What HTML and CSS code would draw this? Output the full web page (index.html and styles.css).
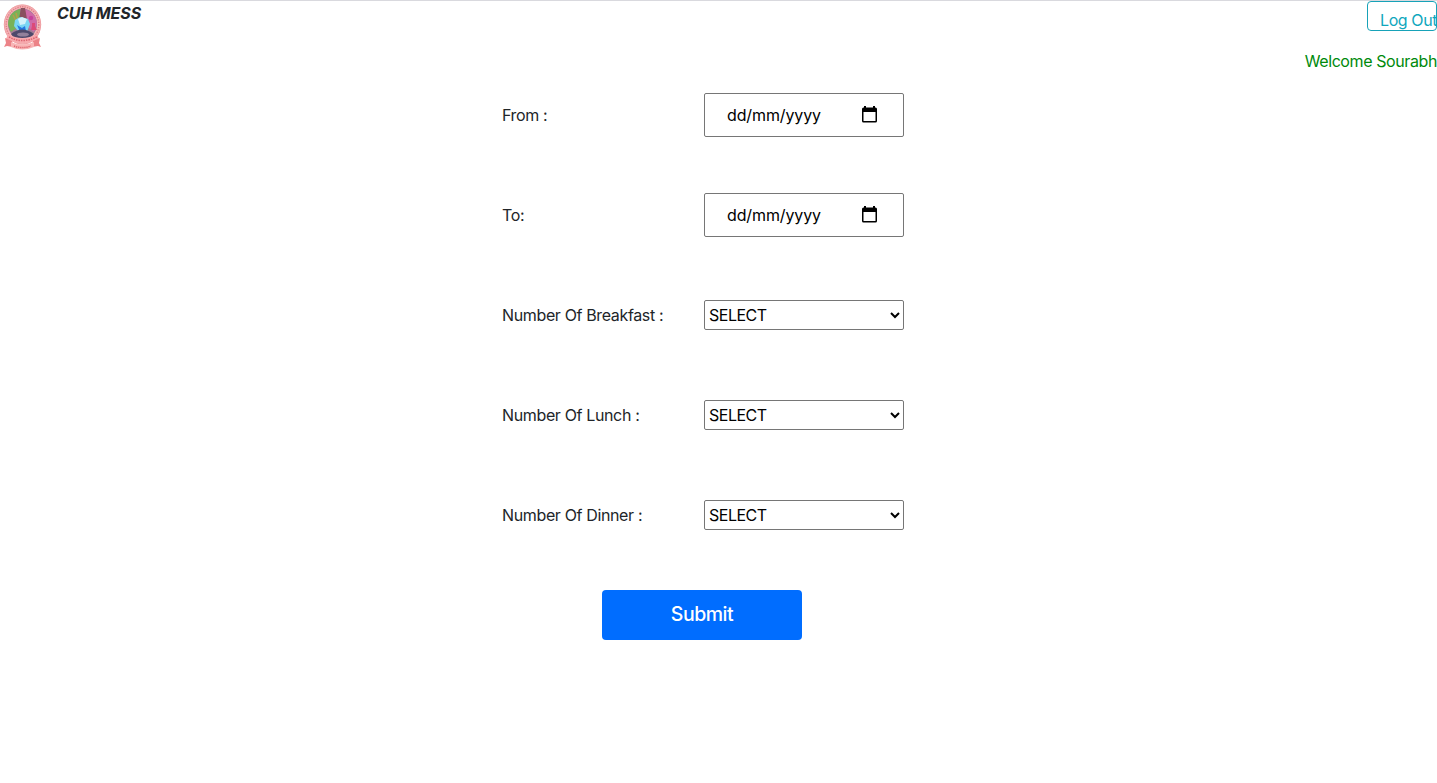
FILE: index.html
```html
<!DOCTYPE html>
<html lang="en">
<head>
<meta charset="utf-8">
<title>CUH MESS</title>
<link rel="stylesheet" href="styles.css">
</head>
<body>
<header class="topbar">
  <div class="brand">
    <svg class="crest" width="40" height="48" viewBox="0 0 40 48">
      <ellipse cx="19.500" cy="21.500" rx="18.600" ry="20" fill="#f6b6b8"/>
      <ellipse cx="19.500" cy="21.500" rx="18.200" ry="19.600" fill="none" stroke="#ee9a9e" stroke-width=".8"/>
      <ellipse cx="19.500" cy="21.500" rx="16.300" ry="17.700" fill="none" stroke="#e2808a" stroke-width="1.500" stroke-dasharray="1.400 1"/>
      <ellipse cx="19.500" cy="21" rx="14.500" ry="15.500" fill="#a07b94"/>
      <path d="M5 22Q5 9 17 6L18 22 8 29Z" fill="#78b258"/>
      <path d="M22 6Q34 10 34 21L31 29 22 22Z" fill="#cf6ba8"/>
      <path d="M18 5h4l2 11h-8Z" fill="#89505f"/>
      <path d="M10 12l4 8M13 10l2 8" stroke="#b3a04a" stroke-width="1.500"/>
      <circle cx="28" cy="15" r="2.200" fill="#c7439c"/>
      <path d="M29 20h3v3l2 4h-6l1-4Z" fill="#dc4a78"/>
      <path d="M12 17l5-3 8 2 2 5-3 8-4 2-5-3-4-5Z" fill="#7ad6f4"/>
      <path d="M15 16l4-2 5 2-2 5-5 1Z" fill="#d4f3fb"/>
      <path d="M14 22l5 3 3-2 1 5-5 3Z" fill="#2478e2"/>
      <path d="M8 31Q19 22 31 31L27 35H11Z" fill="#4d496b"/>
      <ellipse cx="20" cy="31.500" rx="6" ry="2" fill="#92819b"/>
      <path d="M5 31Q19 39 34 31L36 36Q19 44 3 36Z" fill="#f7aaae"/>
      <path d="M6 34Q19 41 34 34" fill="none" stroke="#dc6470" stroke-width="1.500" stroke-dasharray="1.500 1"/>
      <path d="M2 35l7 3 1 6-6-1-3 1 2-4ZM37 35l-7 3-1 6 6-1 3 1-2-4Z" fill="#ec8388"/>
      <path d="M8 39Q19 44 31 39V44Q19 49 8 44Z" fill="#f8b5b6"/>
      <path d="M11 43Q19 46 28 43" fill="none" stroke="#df6871" stroke-width="1.500" stroke-dasharray="1.300 .8"/>
    </svg>
    <span class="title">CUH MESS</span>
  </div>
  <div class="account">
    <a class="logout"><span>Log Out</span></a>
    <span class="welcome">Welcome Sourabh</span>
  </div>
</header>
<main class="form">
  <div class="row"><span class="label">From :</span>
    <div class="date"><span>dd/mm/yyyy</span><svg class="calendar" width="15" height="17" viewBox="0 0 15 17"><path d="M2 0h2v1.500h7V0h2v1.500h.5Q15 1.500 15 3v12q0 1.500-1.500 1.500h-12Q0 16.500 0 15V3q0-1.500 1.500-1.500H2ZM1.500 6v9h12V6Z" fill="#000" fill-rule="evenodd"/></svg></div></div>
  <div class="row"><span class="label">To:</span>
    <div class="date"><span>dd/mm/yyyy</span><svg class="calendar" width="15" height="17" viewBox="0 0 15 17"><path d="M2 0h2v1.500h7V0h2v1.500h.5Q15 1.500 15 3v12q0 1.500-1.500 1.500h-12Q0 16.500 0 15V3q0-1.500 1.500-1.500H2ZM1.500 6v9h12V6Z" fill="#000" fill-rule="evenodd"/></svg></div></div>
  <div class="row"><span class="label">Number Of Breakfast :</span>
    <div class="select"><span>SELECT</span><svg width="10" height="8" viewBox="0 0 10 8"><path d="M1 2l4 4 4-4" fill="none" stroke="#000" stroke-width="2"/></svg></div></div>
  <div class="row"><span class="label">Number Of Lunch :</span>
    <div class="select"><span>SELECT</span><svg width="10" height="8" viewBox="0 0 10 8"><path d="M1 2l4 4 4-4" fill="none" stroke="#000" stroke-width="2"/></svg></div></div>
  <div class="row"><span class="label">Number Of Dinner :</span>
    <div class="select"><span>SELECT</span><svg width="10" height="8" viewBox="0 0 10 8"><path d="M1 2l4 4 4-4" fill="none" stroke="#000" stroke-width="2"/></svg></div></div>
  <button class="submit">Submit</button>
</main>
</body>
</html>
```
FILE: styles.css
```css
* { box-sizing: border-box; }
body {
  margin: 0;
  height: 783px;
  overflow: hidden;
  background: #fff;
  border-top: 1px solid #d9d9de;
  color: #212529;
  font: 16px/24px Inter, "Liberation Sans", sans-serif;
  letter-spacing: -0.4px;
  white-space: nowrap;
}
.topbar { display: flex; justify-content: space-between; height: 64px; }
.brand { display: flex; align-items: flex-start; gap: 14px; padding: 2px 0 0 3px; }
.crest { filter: blur(0.4px); }
.title { font-weight: 700; font-style: italic; line-height: 21px; letter-spacing: -0.12px; }
.account { display: flex; flex-direction: column; align-items: flex-end; }
.logout {
  width: 70px;
  height: 30px;
  padding: 6px 0 0 12px;
  border: 1px solid #17a2b8;
  border-radius: 4px;
  color: #0fa7bd;
}
.welcome { margin-top: 18px; color: #008a0c; }
.form { width: 402px; margin-left: 502px; }
.label { letter-spacing: -0.36px; }
.row { display: grid; grid-template-columns: 202px 200px; align-items: center; height: 100px; }
.date, .select {
  display: flex;
  align-items: center;
  justify-content: space-between;
  border: 1px solid #767676;
  border-radius: 2px;
  color: #000;
}
.date { height: 44px; padding: 0 26px 0 22px; letter-spacing: -0.12px; }
.calendar { margin-bottom: 1px; }
.select { height: 30px; padding: 0 3px 0 4px; letter-spacing: -0.5px; }
.submit {
  display: block;
  width: 200px;
  height: 50px;
  margin: 25px 0 0 100px;
  padding: 0 0 2px;
  border: 0;
  border-radius: 4px;
  background: #006dff;
  color: #fff;
  font: 500 19.500px/30px Inter, "Liberation Sans", sans-serif;
  letter-spacing: -0.5px;
}
```
